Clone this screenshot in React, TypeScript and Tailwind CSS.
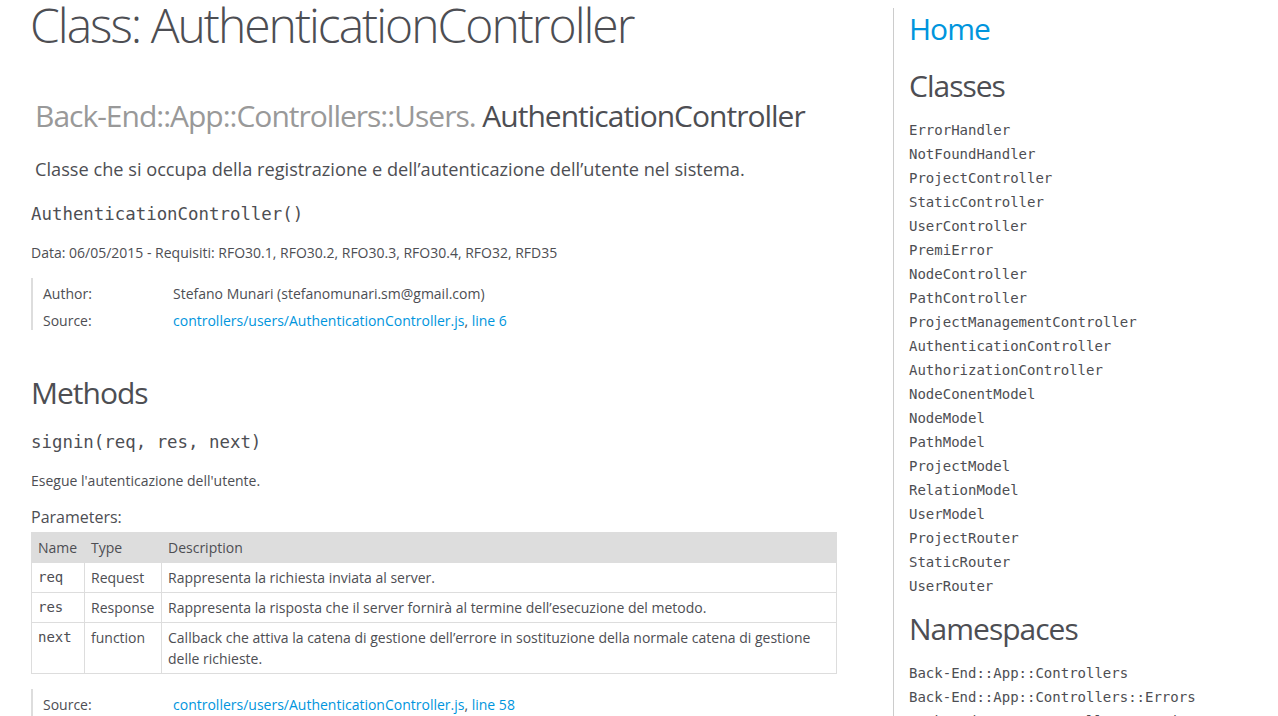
const classes = [
  'ErrorHandler',
  'NotFoundHandler',
  'ProjectController',
  'StaticController',
  'UserController',
  'PremiError',
  'NodeController',
  'PathController',
  'ProjectManagementController',
  'AuthenticationController',
  'AuthorizationController',
  'NodeConentModel',
  'NodeModel',
  'PathModel',
  'ProjectModel',
  'RelationModel',
  'UserModel',
  'ProjectRouter',
  'StaticRouter',
  'UserRouter',
];

const namespaces = [
  'Back-End::App::Controllers',
  'Back-End::App::Controllers::Errors',
  'Back-End::App::Controllers::Project',
];

const params = [
  { name: 'req', type: 'Request', desc: 'Rappresenta la richiesta inviata al server.' },
  { name: 'res', type: 'Response', desc: 'Rappresenta la risposta che il server fornirà al termine dell’esecuzione del metodo.' },
  {
    name: 'next',
    type: 'function',
    desc: 'Callback che attiva la catena di gestione dell’errore in sostituzione della normale catena di gestione delle richieste.',
  },
];

const sans = "font-['Open_Sans','Liberation_Sans',sans-serif]";
const mono = "font-['DejaVu_Sans_Mono','Liberation_Mono',monospace]";

export default function App() {
  return (
    <div className={`${sans} w-[1278px] h-[716px] overflow-hidden bg-white text-[#4d4e53] flex`}>
      {/* main column */}
      <div className="w-[893px] shrink-0 pl-[31px] pr-[30px]">
        <h1 className="-ml-px text-[48px] leading-[50px] font-light tracking-[-2px]">Class: AuthenticationController</h1>

        <h2 className="mt-[46px] ml-[4px] text-[30px] leading-[40px] tracking-[-1px]">
          <span className="text-[#999]">Back-End::App::Controllers::Users.</span> AuthenticationController
        </h2>

        <p className="mt-[21px] ml-[4px] text-[18.2px] leading-[24px]">
          Classe che si occupa della registrazione e dell’autenticazione dell’utente nel sistema.
        </p>

        <h4 className={`${mono} mt-[21px] text-[17.4px] leading-[24px]`}>AuthenticationController()</h4>

        <p className="mt-[17px] text-[14px] leading-[20px]">
          Data: 06/05/2015 - Requisiti: RFO30.1, RFO30.2, RFO30.3, RFO30.4, RFO32, RFD35
        </p>

        <dl className="mt-[15px] h-[52px] border-l-2 border-[#ddd] pt-[2px] text-[14px] leading-[27px]">
          <div className="flex">
            <dt className="w-[140px] pl-[10px]">Author:</dt>
            <dd>Stefano Munari (stefanomunari.sm@gmail.com)</dd>
          </div>
          <div className="flex">
            <dt className="w-[140px] pl-[10px]">Source:</dt>
            <dd>
              <span className="text-[#0095dd]">controllers/users/AuthenticationController.js</span>,{' '}
              <span className="text-[#0095dd]">line 6</span>
            </dd>
          </div>
        </dl>

        <h3 className="mt-[43px] text-[30px] leading-[40px] tracking-[-1px]">Methods</h3>

        <h4 className={`${mono} mt-[17px] text-[17.4px] leading-[24px]`}>signin(req, res, next)</h4>

        <p className="mt-[17px] text-[14px] leading-[20px]">Esegue l'autenticazione dell'utente.</p>

        <h5 className="mt-[15px] text-[16px] leading-[22px]">Parameters:</h5>

        <table className="mt-[4px] w-[806px] border-collapse text-[14px] leading-[21px]">
          <thead>
            <tr className="bg-[#ddd]">
              <th className="border border-[#ddd] px-[6px] py-[4px] text-left font-normal w-[53px]">Name</th>
              <th className="border border-[#ddd] px-[6px] py-[4px] text-left font-normal w-[77px]">Type</th>
              <th className="border border-[#ddd] px-[6px] py-[4px] text-left font-normal">Description</th>
            </tr>
          </thead>
          <tbody>
            {params.map((p) => (
              <tr key={p.name}>
                <td className={`${mono} border border-[#ddd] px-[6px] py-[4px] align-top text-[14px]`}>{p.name}</td>
                <td className="border border-[#ddd] px-[6px] py-[4px] align-top">{p.type}</td>
                <td className="border border-[#ddd] px-[6px] py-[4px] align-top">{p.desc}</td>
              </tr>
            ))}
          </tbody>
        </table>

        <dl className="mt-[15px] h-[40px] border-l-2 border-[#ddd] pt-[2px] text-[14px] leading-[27px]">
          <div className="flex">
            <dt className="w-[140px] pl-[10px]">Source:</dt>
            <dd>
              <span className="text-[#0095dd]">controllers/users/AuthenticationController.js</span>,{' '}
              <span className="text-[#0095dd]">line 58</span>
            </dd>
          </div>
        </dl>
      </div>

      {/* navigation */}
      <nav className="mt-[8px] flex-1 border-l border-[#ccc] pl-[15px]">
        <h2 className="mt-[1px] text-[30px] leading-[40px] tracking-[-1px] text-[#0095dd]">Home</h2>
        <h3 className="mt-[17px] text-[30px] leading-[40px] tracking-[-1px]">Classes</h3>
        <ul className={`${mono} mt-[12px] text-[14px] leading-[24px]`}>
          {classes.map((c) => (
            <li key={c}>{c}</li>
          ))}
        </ul>
        <h3 className="mt-[11px] text-[30px] leading-[40px] tracking-[-1px]">Namespaces</h3>
        <ul className={`${mono} mt-[12px] text-[14px] leading-[24px]`}>
          {namespaces.map((n) => (
            <li key={n}>{n}</li>
          ))}
        </ul>
      </nav>
    </div>
  );
}
